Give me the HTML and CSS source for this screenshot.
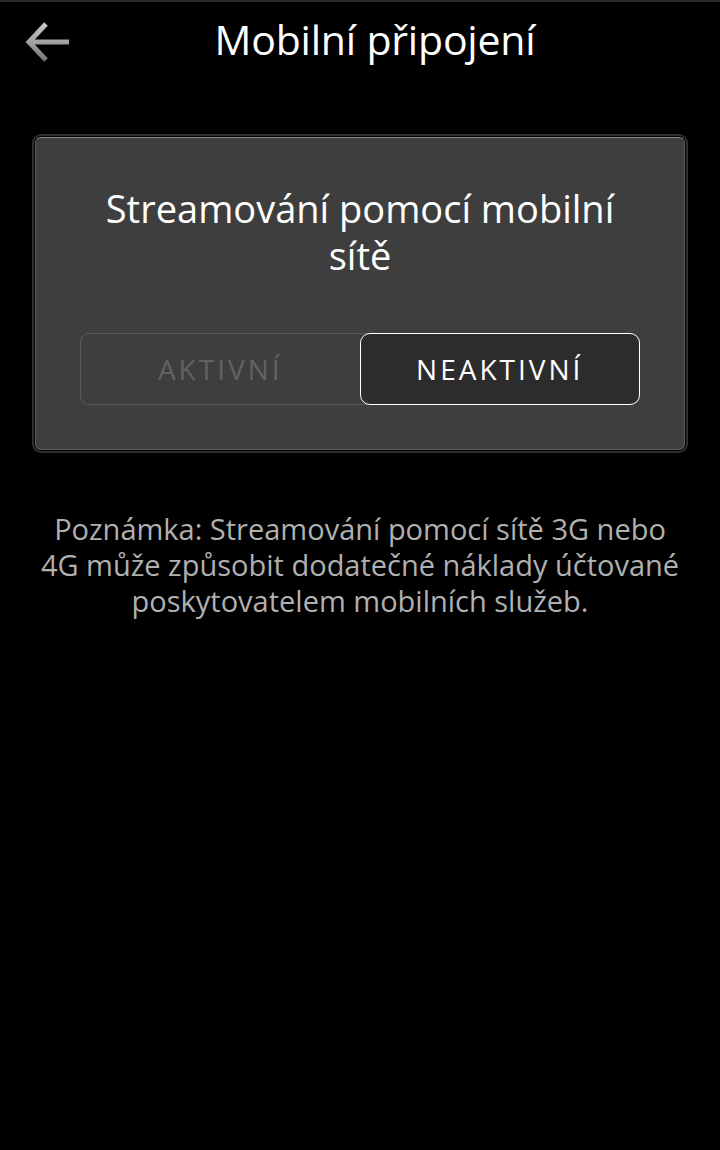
FILE: index.html
```html
<!DOCTYPE html>
<html lang="cs">
    <head>
        <meta charset="UTF-8">
        <meta name="viewport" content="width=device-width, initial-scale=1.0">
        <title>Mobilní připojení</title>
        <link rel="stylesheet" href="styles.css">
    </head>
    <body>
        <div class="header">
            <div class="back">
                <svg width="48" height="44" viewBox="0 0 48 44">
                    <defs>
                        <linearGradient id="arrowGrad" x1="0" y1="0" x2="0" y2="1">
                            <stop offset="0" stop-color="#c8c8c8"/>
                            <stop offset="1" stop-color="#7a7a7a"/>
                        </linearGradient>
                    </defs>
                    <path d="M22 3 L5 21 L22 39 M5 21 L45 21" fill="none" stroke="url(#arrowGrad)" stroke-width="5"/>
                </svg>
            </div>
            <h1 class="title">Mobilní připojení</h1>
        </div>

        <div class="card">
            <h2 class="card-title">Streamování pomocí mobilní sítě</h2>
            <div class="toggle">
                <div class="opt">AKTIVNÍ</div>
                <div class="opt on">NEAKTIVNÍ</div>
            </div>
        </div>

        <p class="note">Poznámka: Streamování pomocí sítě 3G nebo 4G může způsobit dodatečné náklady účtované poskytovatelem mobilních služeb.</p>
    </body>
</html>
```

FILE: styles.css
```css
*{
    margin: 0;
    padding: 0;
    box-sizing: border-box;
}

body{
    background: #000;
    color: #fff;
    font-family: "Open Sans", "DejaVu Sans", sans-serif;
    height: 100vh;
    overflow: hidden;
    border-top: 2px solid #2a2a2a;
}

.header{
    position: relative;
    height: 74px;
    display: flex;
    align-items: center;
    justify-content: center;
    padding-left: 30px;
}

.back{
    position: absolute;
    left: 24px;
    top: 19px;
}

.title{
    font-weight: normal;
    font-size: 41px;
    letter-spacing: -0.2px;
}

.card{
    margin: 61px 35px 0;
    background: #3e3e3e;
    border: 1px solid #5c5c5c;
    border-top-color: #8a8a8a;
    border-radius: 6px;
    box-shadow: 0 0 0 1px #000, 0 0 0 3px #2e2e2e;
    padding: 47px 44px 44px;
    text-align: center;
}

.card-title{
    font-weight: normal;
    font-size: 38px;
    line-height: 47px;
    padding: 0 10px;
}

.toggle{
    margin-top: 54px;
    display: flex;
    height: 72px;
    border: 1px solid #5a5a5a;
    border-radius: 9px;
}

.opt{
    flex: 1;
    display: flex;
    align-items: center;
    justify-content: center;
    font-size: 28px;
    letter-spacing: 3px;
    color: #626262;
}

.opt.on{
    margin: -1px -1px -1px 0;
    background: #2c2c2c;
    border: 1.5px solid #fff;
    border-radius: 10px;
    color: #fff;
}

.note{
    margin: 61px 36px 0;
    text-align: center;
    color: #b0b0b0;
    font-size: 29px;
    line-height: 36px;
}
```
